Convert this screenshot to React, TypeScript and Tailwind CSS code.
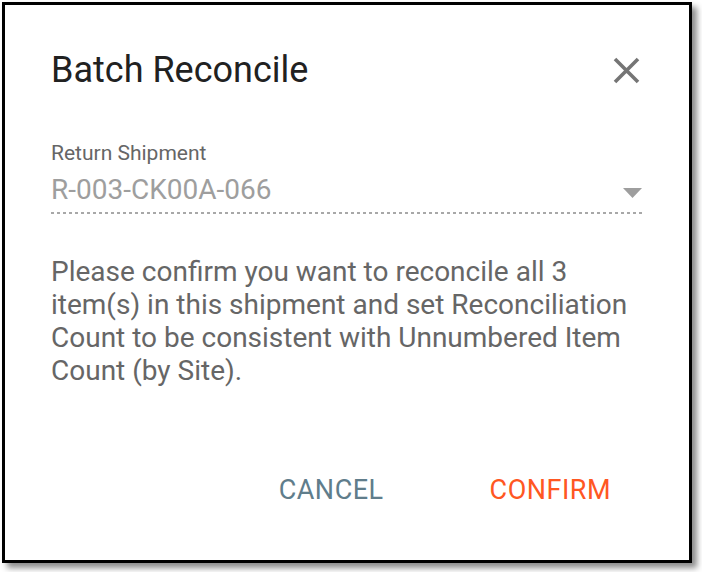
export default function App() {
  return (
    <div className="w-[702px] h-[572px] bg-white pl-[2px] pt-[2px] font-['Roboto',sans-serif]">
      <div className="w-[690px] h-[561px] border-[3px] border-black bg-white shadow-[5px_5px_6px_rgba(0,0,0,0.45)] flex flex-col">
        {/* Header */}
        <div className="flex items-start justify-between pl-[46px] pr-[49px] pt-[44px]">
          <h1 className="text-[36px] leading-[42px] text-[#212121] font-normal">Batch Reconcile</h1>
          <button className="mt-[8px] w-[27px] h-[27px] flex items-center justify-center" aria-label="Close">
            <svg width="27" height="27" viewBox="0 0 27 27" fill="none">
              <path d="M2 2L25 25M25 2L2 25" stroke="#757575" strokeWidth="3.6" />
            </svg>
          </button>
        </div>

        {/* Select */}
        <div className="pl-[46px] pr-[44px] mt-[50px]">
          <label className="block text-[21px] leading-[25px] text-[#666666]">Return Shipment</label>
          <div className="mt-[8px] flex items-start justify-between">
            <span className="text-[28px] leading-[32px] text-[#9e9e9e]">R-003-CK00A-066</span>
            <svg width="19" height="10" viewBox="0 0 19 10" className="mr-[3px] mt-[14px]">
              <path d="M0 0H19L9.5 10Z" fill="#9e9e9e" />
            </svg>
          </div>
          <div className="mt-[6px] h-[2px] bg-[linear-gradient(to_right,#a8a8a8_45%,transparent_45%)] bg-[length:6px_2px]" />
        </div>

        {/* Body */}
        <p className="pl-[46px] pr-[44px] mt-[41px] text-[28px] leading-[33px] text-[#666666]">
          Please confirm you want to reconcile all 3 item(s) in this shipment and set Reconciliation Count to be
          consistent with Unnumbered Item Count (by Site).
        </p>

        {/* Actions */}
        <div className="mt-auto mb-[54px] flex justify-end gap-[106px] pr-[78px]">
          <button className="text-[27px] leading-[32px] text-[#607d8b] tracking-[0.5px]">CANCEL</button>
          <button className="text-[27px] leading-[32px] text-[#ff5722] tracking-[0.5px]">CONFIRM</button>
        </div>
      </div>
    </div>
  )
}
